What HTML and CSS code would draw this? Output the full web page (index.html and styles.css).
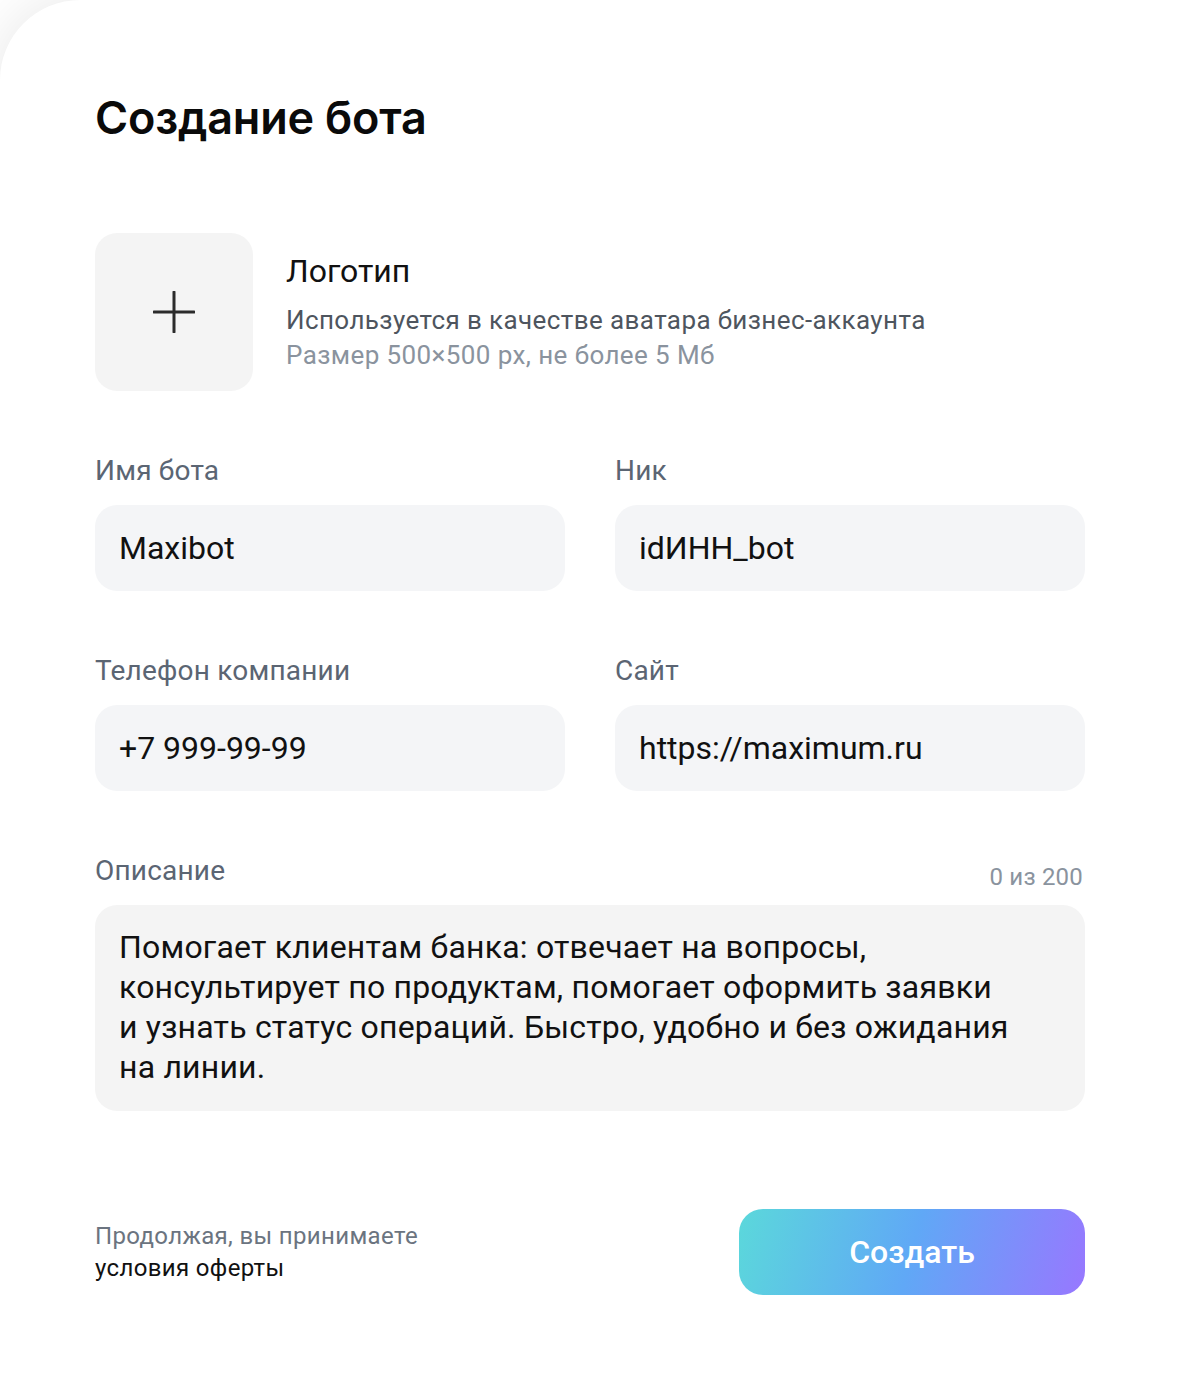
FILE: index.html
```html
<!DOCTYPE html>
<html lang="ru">
<head>
    <meta charset="UTF-8">
    <title>Создание бота</title>
    <link rel="stylesheet" href="styles.css">
</head>
<body>
<div class="card">
    <h1 class="title">Создание бота</h1>

    <div class="logo-row">
        <div class="logo-box">
            <svg width="42" height="42" viewBox="0 0 42 42">
                <path d="M21 1v40M1 21h40" stroke="#2b2b2b" stroke-width="3" stroke-linecap="round" fill="none"/>
            </svg>
        </div>
        <div class="logo-info">
            <div class="logo-title">Логотип</div>
            <div class="logo-desc">Используется в качестве аватара бизнес-аккаунта</div>
            <div class="logo-hint">Размер 500×500 px, не более 5 Мб</div>
        </div>
    </div>

    <div class="fields">
        <div class="field">
            <div class="label">Имя бота</div>
            <div class="input">Maxibot</div>
        </div>
        <div class="field">
            <div class="label">Ник</div>
            <div class="input">idИНН_bot</div>
        </div>
        <div class="field">
            <div class="label">Телефон компании</div>
            <div class="input">+7 999-99-99</div>
        </div>
        <div class="field">
            <div class="label">Сайт</div>
            <div class="input">https://maximum.ru</div>
        </div>
        <div class="field wide">
            <div class="label-row">
                <div class="label">Описание</div>
                <div class="counter">0 из 200</div>
            </div>
            <div class="input textarea">Помогает клиентам банка: отвечает на вопросы,<br>консультирует по продуктам, помогает оформить заявки<br>и узнать статус операций. Быстро, удобно и без ожидания<br>на линии.</div>
        </div>
    </div>

    <div class="footer">
        <div class="terms">
            <div class="terms-gray">Продолжая, вы принимаете</div>
            <div class="terms-link">условия оферты</div>
        </div>
        <a href="javascript:;" class="button">Создать</a>
    </div>
</div>
</body>
</html>
```

FILE: styles.css
```css
*{
    margin: 0;
    padding: 0;
    box-sizing: border-box;
}
body{
    background: #ffffff;
    font-family: Roboto, "Noto Sans", sans-serif;
    color: #111111;
    overflow: hidden;
}
.card{
    width: 100%;
    min-height: 1387px;
    padding: 94px 0 0 95px;
    background: #ffffff;
    border-radius: 80px 0 0 0;
    box-shadow: 0 0 60px rgba(0, 0, 0, 0.1);
}
.title{
    font-family: Inter, "Noto Sans", sans-serif;
    font-size: 45px;
    line-height: 48px;
    font-weight: 600;
    color: #0a0a0a;
    letter-spacing: -0.2px;
    margin-bottom: 91px;
}
.logo-row{
    display: flex;
    gap: 33px;
    width: 990px;
}
.logo-box{
    width: 158px;
    height: 158px;
    border-radius: 22px;
    background: #f4f4f4;
    display: flex;
    align-items: center;
    justify-content: center;
}
.logo-info{
    padding-top: 20px;
}
.logo-title{
    font-size: 32px;
    line-height: 36px;
    color: #111111;
    margin-bottom: 14px;
}
.logo-desc{
    font-size: 26px;
    line-height: 35px;
    letter-spacing: 0.4px;
    color: #4e555e;
}
.logo-hint{
    font-size: 26px;
    line-height: 35px;
    letter-spacing: 0.4px;
    color: #8a939e;
}
.fields{
    width: 990px;
    margin-top: 63px;
    display: grid;
    grid-template-columns: 470px 470px;
    column-gap: 50px;
    row-gap: 63px;
}
.field.wide{
    grid-column: 1 / 3;
}
.label{
    font-size: 28px;
    line-height: 34px;
    letter-spacing: 0.2px;
    color: #5b6573;
    margin-bottom: 17px;
}
.label-row{
    display: flex;
    justify-content: space-between;
}
.counter{
    font-size: 24px;
    line-height: 34px;
    padding-top: 6px;
    letter-spacing: 0.2px;
    color: #8a939e;
    margin-right: 2px;
}
.input{
    height: 86px;
    border-radius: 22px;
    background: #f4f5f7;
    padding: 0 24px;
    display: flex;
    align-items: center;
    font-size: 32px;
    color: #111111;
}
.input.textarea{
    display: block;
    height: 206px;
    background: #f4f4f4;
    padding-top: 22px;
    line-height: 40px;
    letter-spacing: 0.2px;
}
.footer{
    width: 990px;
    margin-top: 98px;
    display: flex;
    justify-content: space-between;
    align-items: center;
}
.terms{
    font-size: 24px;
    line-height: 32px;
    letter-spacing: 0.35px;
}
.terms-gray{
    color: #6b7480;
}
.terms-link{
    color: #111111;
}
.button{
    display: block;
    width: 346px;
    height: 86px;
    border-radius: 24px;
    background: linear-gradient(105deg, #5bd8db 0%, #60a8f6 50%, #9877ff 100%);
    color: #ffffff;
    text-decoration: none;
    text-align: center;
    font-size: 32px;
    font-weight: 500;
    line-height: 86px;
}
```
